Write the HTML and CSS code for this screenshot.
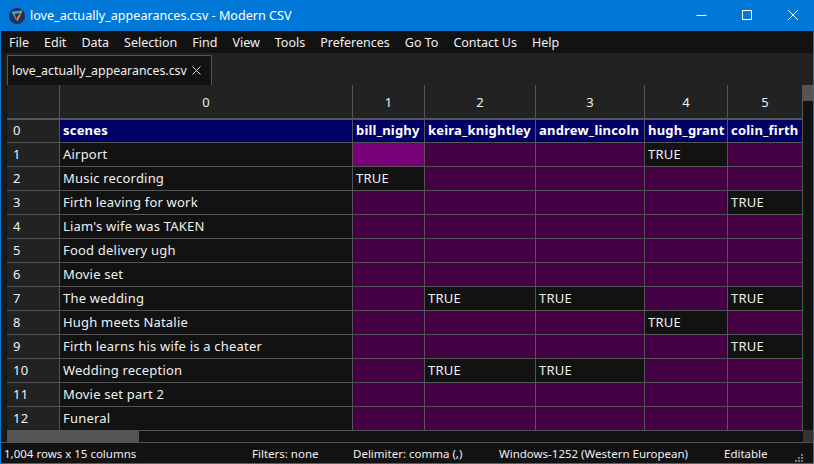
FILE: index.html
```html
<!DOCTYPE html>
<html lang="en">
<head>
    <meta charset="UTF-8">
    <title>love_actually_appearances.csv - Modern CSV</title>
    <link rel="stylesheet" href="styles.css">
</head>
<body>
    <div class="window">
        <div class="title-bar">
            <svg class="app-icon" width="16" height="16" viewBox="0 0 16 16">
                <circle cx="8" cy="8" r="8" fill="#2b2b5c"/>
                <path d="M2.4 3.8 L13.6 2.6 L11.6 5 L5.6 5.8 L8 13.8 Z" fill="#35b4c4"/>
                <path d="M13.8 2.6 L8.4 13.6 L7.4 10.6 L11.2 5 Z" fill="#f08a24"/>
            </svg>
            <div class="title-text">love_actually_appearances.csv - Modern CSV</div>
            <div class="win-buttons">
                <svg class="win-btn" width="46" height="31" viewBox="0 0 46 31"><path d="M20.5 15.5 H30.5" stroke="#fff" stroke-width="1"/></svg>
                <svg class="win-btn" width="46" height="31" viewBox="0 0 46 31"><rect x="20.5" y="10.5" width="9" height="9" fill="none" stroke="#fff" stroke-width="1"/></svg>
                <svg class="win-btn" width="46" height="31" viewBox="0 0 46 31"><path d="M20 10 L30 20 M30 10 L20 20" stroke="#fff" stroke-width="1"/></svg>
            </div>
        </div>

        <div class="menu-bar">
            <div class="menu-item">File</div>
            <div class="menu-item">Edit</div>
            <div class="menu-item">Data</div>
            <div class="menu-item">Selection</div>
            <div class="menu-item">Find</div>
            <div class="menu-item">View</div>
            <div class="menu-item">Tools</div>
            <div class="menu-item">Preferences</div>
            <div class="menu-item">Go To</div>
            <div class="menu-item">Contact Us</div>
            <div class="menu-item">Help</div>
        </div>

        <div class="workspace">
            <div class="dock-handle"></div>
            <div class="doc">
                <div class="tab-bar">
                    <div class="tab">
                        <span>love_actually_appearances.csv</span>
                        <svg width="9" height="9" viewBox="0 0 9 9"><path d="M0.5 0.5 L8.5 8.5 M8.5 0.5 L0.5 8.5" stroke="#ddd" stroke-width="1"/></svg>
                    </div>
                </div>
                <div class="sheet">
                    <div class="sheet-main">
                        <table class="grid">
                            <colgroup>
                                <col class="c-head"><col class="c0"><col class="c1"><col class="c2"><col class="c3"><col class="c4"><col class="c5">
                            </colgroup>
                            <tr class="col-heads">
                                <th></th><th>0</th><th>1</th><th>2</th><th>3</th><th>4</th><th>5</th>
                            </tr>
                            <tr class="names">
                                <th>0</th><td>scenes</td><td>bill_nighy</td><td>keira_knightley</td><td>andrew_lincoln</td><td>hugh_grant</td><td>colin_firth</td>
                            </tr>
                            <tr><th>1</th><td>Airport</td><td class="current"></td><td class="no"></td><td class="no"></td><td>TRUE</td><td class="no"></td></tr>
                            <tr><th>2</th><td>Music recording</td><td>TRUE</td><td class="no"></td><td class="no"></td><td class="no"></td><td class="no"></td></tr>
                            <tr><th>3</th><td>Firth leaving for work</td><td class="no"></td><td class="no"></td><td class="no"></td><td class="no"></td><td>TRUE</td></tr>
                            <tr><th>4</th><td>Liam's wife was TAKEN</td><td class="no"></td><td class="no"></td><td class="no"></td><td class="no"></td><td class="no"></td></tr>
                            <tr><th>5</th><td>Food delivery ugh</td><td class="no"></td><td class="no"></td><td class="no"></td><td class="no"></td><td class="no"></td></tr>
                            <tr><th>6</th><td>Movie set</td><td class="no"></td><td class="no"></td><td class="no"></td><td class="no"></td><td class="no"></td></tr>
                            <tr><th>7</th><td>The wedding</td><td class="no"></td><td>TRUE</td><td>TRUE</td><td class="no"></td><td>TRUE</td></tr>
                            <tr><th>8</th><td>Hugh meets Natalie</td><td class="no"></td><td class="no"></td><td class="no"></td><td>TRUE</td><td class="no"></td></tr>
                            <tr><th>9</th><td>Firth learns his wife is a cheater</td><td class="no"></td><td class="no"></td><td class="no"></td><td class="no"></td><td>TRUE</td></tr>
                            <tr><th>10</th><td>Wedding reception</td><td class="no"></td><td>TRUE</td><td>TRUE</td><td class="no"></td><td class="no"></td></tr>
                            <tr><th>11</th><td>Movie set part 2</td><td class="no"></td><td class="no"></td><td class="no"></td><td class="no"></td><td class="no"></td></tr>
                            <tr><th>12</th><td>Funeral</td><td class="no"></td><td class="no"></td><td class="no"></td><td class="no"></td><td class="no"></td></tr>
                        </table>
                        <div class="h-scroll"><div class="h-thumb"></div></div>
                    </div>
                    <div class="v-scroll">
                        <div class="v-thumb"></div>
                        <div class="v-track"></div>
                        <div class="corner"></div>
                    </div>
                </div>
            </div>
        </div>

        <div class="status-bar">
            <div class="status-rows">1,004 rows x 15 columns</div>
            <div class="status-filters">Filters: none</div>
            <div class="status-delim">Delimiter: comma (,)</div>
            <div class="status-enc">Windows-1252 (Western European)</div>
            <div class="status-edit">Editable</div>
            <svg class="grip" width="10" height="10" viewBox="0 0 10 10">
                <path d="M7 1h2v2H7z M4 4h2v2H4z M7 4h2v2H7z M1 7h2v2H1z M4 7h2v2H4z M7 7h2v2H7z" fill="#777"/>
            </svg>
        </div>
    </div>
</body>
</html>
```

FILE: styles.css
```css
* {
    margin: 0;
    padding: 0;
    box-sizing: border-box;
}

body {
    background-color: #121212;
    color: #f0f0f0;
    font-family: 'Noto Sans', 'Open Sans', sans-serif;
    font-size: 12px;
    overflow: hidden;
}

.window {
    display: flex;
    flex-direction: column;
    width: 814px;
    height: 464px;
    border-left: 1px solid #0078d7;
    border-right: 1px solid #0078d7;
    border-bottom: 1px solid #0078d7;
    background-color: #121212;
}

.title-bar {
    display: flex;
    align-items: center;
    height: 31px;
    margin: 0 -1px;
    padding-left: 9px;
    background-color: #0078d7;
    color: white;
}

.app-icon {
    margin-right: 5px;
}

.title-text {
    flex: 1;
    font-size: 12.6px;
}

.win-buttons {
    display: flex;
}

.win-btn {
    display: block;
}

.menu-bar {
    display: flex;
    align-items: center;
    height: 22px;
    padding-left: 0.5px;
    background-color: #121212;
}

.menu-item {
    padding: 0 7.5px;
    font-size: 12.5px;
}

.workspace {
    display: flex;
    flex: 1;
    min-height: 0;
}

.dock-handle {
    width: 5px;
    background-color: #1a1a1a;
    background-image: radial-gradient(#4a4a4a 0.6px, transparent 0.7px);
    background-size: 2px 2px;
}

.doc {
    flex: 1;
    display: flex;
    flex-direction: column;
    min-width: 0;
}

.tab-bar {
    height: 32px;
    padding: 2px 0 0 1px;
    background-color: #222;
}

.tab {
    display: flex;
    align-items: center;
    gap: 5px;
    width: 205px;
    height: 30px;
    padding-left: 4px;
    background-color: #121212;
    border: 1px solid #555;
    border-bottom: none;
    font-size: 12.35px;
    white-space: nowrap;
}

.sheet {
    display: flex;
    flex: 1;
    min-height: 0;
}

.sheet-main {
    width: 797px;
}

.grid {
    table-layout: fixed;
    width: 796px;
    border-collapse: separate;
    border-spacing: 0;
    margin-left: 1px;
    background-color: #121212;
}

.c-head { width: 53px; }
.c0 { width: 293px; }
.c1 { width: 72px; }
.c2 { width: 111px; }
.c3 { width: 109px; }
.c4 { width: 83px; }
.c5 { width: 75px; }

.grid th,
.grid td {
    height: 24px;
    padding: 0 0 2px 3px;
    border-right: 1px solid #555;
    border-bottom: 1px solid #555;
    font-size: 13px;
    font-weight: normal;
    letter-spacing: 0.2px;
    text-align: left;
    white-space: nowrap;
    overflow: hidden;
}

.grid th {
    background-color: #222;
    padding-left: 6px;
}

.grid .col-heads th {
    height: 35px;
    padding: 0 3px;
    border-bottom-width: 2px;
    text-align: center;
}

.names th,
.names td {
    height: 23px;
}

.names td {
    background-color: #000066;
    color: white;
    font-weight: bold;
}

.grid td.no {
    background-color: #430043;
}

.grid td.current {
    background-color: #7a007a;
}

.h-scroll {
    height: 12px;
    background-color: #121212;
}

.h-thumb {
    width: 132px;
    height: 12px;
    margin-left: 1px;
    background-color: #555;
}

.v-scroll {
    display: flex;
    flex-direction: column;
    flex: 1;
}

.v-thumb {
    height: 16px;
    background-color: #555;
}

.v-track {
    flex: 1;
    background-color: #121212;
}

.corner {
    height: 12px;
    background-color: #333;
    background-image: radial-gradient(#555 0.6px, transparent 0.7px);
    background-size: 2px 2px;
}

.status-bar {
    display: flex;
    align-items: center;
    height: 21px;
    border-top: 1px solid #555;
    padding-left: 3px;
    font-size: 11.5px;
    white-space: nowrap;
}

.status-rows { width: 248px; }
.status-filters { width: 101px; }
.status-delim { width: 146px; }
.status-enc { width: 225px; }
.status-edit { width: 70px; }

.grip {
    margin-top: 9px;
}
```
